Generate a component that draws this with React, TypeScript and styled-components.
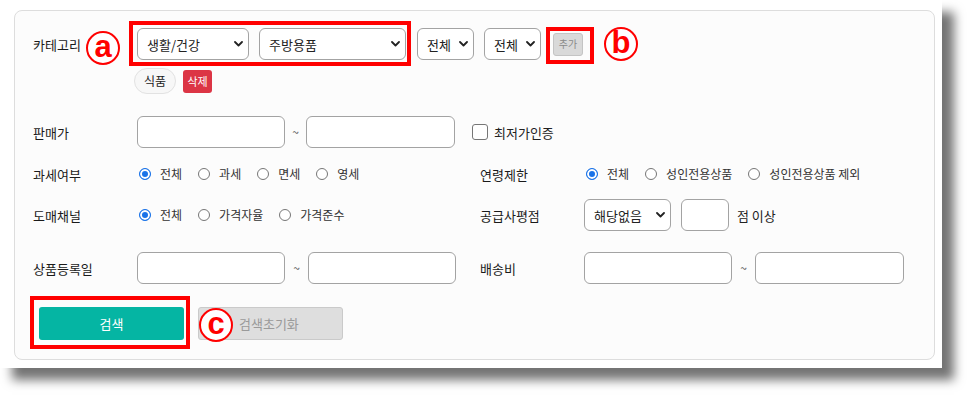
import React from "react";
import styled, { createGlobalStyle } from "styled-components";

const GlobalStyle = createGlobalStyle`
  html, body { margin: 0; padding: 0; background: #ffffff; }
  body { font-family: "Noto Sans CJK KR", "Noto Sans", sans-serif; color: #222; }
  * { box-sizing: border-box; }
`;

const Page = styled.div`
  width: 967px;
  height: 403px;
  overflow: hidden;
`;

const Sheet = styled.div`
  width: 942px;
  height: 368px;
  background: #ffffff;
  box-shadow: 12px 12px 10px rgba(0, 0, 0, 0.55);
  padding: 10px 0 0 14px;
`;

const Card = styled.div`
  width: 921px;
  height: 350px;
  border: 1px solid #dddddd;
  border-radius: 8px;
  background: #fcfcfc;
  padding: 17px 0 0 18px;
  display: flex;
  flex-direction: column;
`;

const Row = styled.div<{ $mt?: number; $h?: number }>`
  position: relative;
  display: flex;
  align-items: center;
  margin-top: ${(p) => p.$mt ?? 0}px;
  height: ${(p) => p.$h ?? 32}px;
`;

const SplitRow = styled.div<{ $mt?: number; $h?: number }>`
  display: grid;
  grid-template-columns: 447px 1fr;
  margin-top: ${(p) => p.$mt ?? 0}px;
  height: ${(p) => p.$h ?? 32}px;
`;

const Cell = styled.div`
  display: flex;
  align-items: center;
`;

const Label = styled.div`
  width: 104px;
  flex-shrink: 0;
  font-size: 13px;
  line-height: 1;
  color: #1a1a1a;
`;

const Group = styled.div<{ $gap?: number }>`
  display: flex;
  align-items: center;
  gap: ${(p) => p.$gap ?? 10}px;
`;

const Frame = styled.div<{ $inset: string; $ml?: number }>`
  position: relative;
  display: flex;
  align-items: center;
  gap: 10px;
  margin-left: ${(p) => p.$ml ?? 0}px;
  &::after {
    content: "";
    position: absolute;
    inset: ${(p) => p.$inset};
    border: 4px solid #ff0000;
    pointer-events: none;
  }
`;

const Marker = styled.div<{ $x: number; $y: number }>`
  position: absolute;
  left: ${(p) => p.$x}px;
  top: ${(p) => p.$y}px;
  width: 34px;
  height: 34px;
  border-radius: 50%;
  border: 2.5px solid #ff0000;
  background: #ffffff;
  color: #ff0000;
  font-family: "Liberation Sans", Arial, sans-serif;
  font-weight: 700;
  font-size: 31px;
  line-height: 1;
  display: flex;
  align-items: center;
  justify-content: center;
  padding-bottom: 4px;
  z-index: 2;
`;

const SelectWrap = styled.div<{ $w: number; $ml?: number }>`
  position: relative;
  width: ${(p) => p.$w}px;
  height: 32px;
  margin-left: ${(p) => p.$ml ?? 0}px;
  flex-shrink: 0;
  svg {
    position: absolute;
    right: 6px;
    top: 13px;
    pointer-events: none;
  }
`;

const NativeSelect = styled.select`
  appearance: none;
  -webkit-appearance: none;
  width: 100%;
  height: 100%;
  border: 1px solid #a3a3a3;
  border-radius: 6px;
  background: #ffffff;
  padding: 0 0 0 9px;
  font-family: inherit;
  font-size: 13px;
  color: #222;
  outline: none;
`;

const Chevron = () => (
  <svg width="9" height="6" viewBox="0 0 9 6">
    <path d="M1 1 L4.5 4.5 L8 1" fill="none" stroke="#222" strokeWidth="1.8" strokeLinecap="round" strokeLinejoin="round" />
  </svg>
);

const Select = ({ w, ml, value }: { w: number; ml?: number; value: string }) => (
  <SelectWrap $w={w} $ml={ml}>
    <NativeSelect defaultValue={value}>
      <option value={value}>{value}</option>
    </NativeSelect>
    <Chevron />
  </SelectWrap>
);

const TextInput = styled.input.attrs({ type: "text" })<{ $w: number }>`
  width: ${(p) => p.$w}px;
  height: 32px;
  border: 1px solid #a3a3a3;
  border-radius: 6px;
  background: #ffffff;
  padding: 0 8px;
  font-family: inherit;
  font-size: 13px;
  outline: none;
  flex-shrink: 0;
`;

const Tilde = styled.span<{ $space: number }>`
  width: ${(p) => p.$space}px;
  text-align: center;
  font-size: 12px;
  color: #555;
  line-height: 1;
`;

const AddButton = styled.button`
  width: 30px;
  height: 23px;
  padding: 0;
  border: 1px solid #c4c4c4;
  border-radius: 3px;
  background: #d9d9d9;
  color: #8a8a8a;
  font-family: inherit;
  font-size: 10px;
  line-height: 1;
`;

const TagRow = styled.div`
  display: flex;
  align-items: center;
  gap: 7px;
  margin-top: 8px;
  padding-left: 101px;
  height: 26px;
`;

const Chip = styled.span`
  display: inline-flex;
  align-items: center;
  justify-content: center;
  width: 42px;
  height: 26px;
  border: 1px solid #e2e2e2;
  border-radius: 13px;
  background: #f7f7f7;
  font-size: 12px;
  color: #222;
  line-height: 1;
`;

const DeleteButton = styled.button`
  width: 29px;
  height: 23px;
  padding: 0;
  border: none;
  border-radius: 3px;
  background: #dc3545;
  color: #ffffff;
  font-family: inherit;
  font-size: 11px;
  line-height: 1;
`;

const CheckLabel = styled.label<{ $ml?: number }>`
  display: flex;
  align-items: center;
  gap: 6px;
  margin-left: ${(p) => p.$ml ?? 0}px;
  font-size: 13px;
  color: #222;
  line-height: 1;
`;

const CheckBox = styled.input.attrs({ type: "checkbox" })`
  appearance: none;
  -webkit-appearance: none;
  margin: 0;
  width: 16px;
  height: 16px;
  border: 1px solid #767676;
  border-radius: 3px;
  background: #ffffff;
`;

const RadioGroup = styled.div`
  display: flex;
  align-items: center;
  gap: 16px;
  padding-left: 2px;
`;

const RadioItem = styled.label`
  display: flex;
  align-items: center;
  gap: 9px;
  font-size: 12px;
  line-height: 1;
  color: #333;
`;

const Radio = styled.input.attrs({ type: "radio" })`
  appearance: none;
  -webkit-appearance: none;
  margin: 0;
  width: 12px;
  height: 12px;
  border-radius: 50%;
  border: 1px solid #767676;
  background: #ffffff;
  &:checked {
    border-color: #1a73e8;
    background: #1a73e8;
    box-shadow: inset 0 0 0 2px #ffffff;
  }
`;

const Suffix = styled.span`
  margin-left: 8px;
  font-size: 13px;
  color: #222;
  line-height: 1;
`;

const PrimaryButton = styled.button`
  width: 145px;
  height: 33px;
  border: none;
  border-radius: 3px;
  background: #05b5a3;
  color: #ffffff;
  font-family: inherit;
  font-size: 13px;
`;

const ResetButton = styled.button`
  width: 145px;
  height: 33px;
  margin-left: 14px;
  border: 1px solid #cacaca;
  border-radius: 3px;
  background: #dedede;
  color: #9a9a9a;
  font-family: inherit;
  font-size: 13px;
  padding-left: 40px;
  text-align: left;
`;

const RadioSet = ({ name, items }: { name: string; items: string[] }) => (
  <RadioGroup>
    {items.map((t, i) => (
      <RadioItem key={t}>
        <Radio name={name} defaultChecked={i === 0} />
        {t}
      </RadioItem>
    ))}
  </RadioGroup>
);

export default function App() {
  return (
    <Page>
      <GlobalStyle />
      <Sheet>
        <Card>
          <Row $h={32}>
            <Label>카테고리</Label>
            <Marker $x={53} $y={3}>a</Marker>
            <Frame $inset="-7px -5px -6px -8px">
              <Select w={112} value="생활/건강" />
              <Select w={147} value="주방용품" />
            </Frame>
            <Select w={57} ml={11} value="전체" />
            <Select w={57} ml={10} value="전체" />
            <Frame $inset="-6px -11px -8px -7px" $ml={12}>
              <AddButton>추가</AddButton>
            </Frame>
            <Marker $x={571} $y={-1}>b</Marker>
          </Row>
          <TagRow>
            <Chip>식품</Chip>
            <DeleteButton>삭제</DeleteButton>
          </TagRow>
          <Row $mt={22} $h={32}>
            <Label>판매가</Label>
            <TextInput $w={148} />
            <Tilde $space={21}>~</Tilde>
            <TextInput $w={149} />
            <CheckLabel $ml={17}>
              <CheckBox />
              최저가인증
            </CheckLabel>
          </Row>
          <SplitRow $mt={11} $h={30}>
            <Cell>
              <Label>과세여부</Label>
              <RadioSet name="tax" items={["전체", "과세", "면세", "영세"]} />
            </Cell>
            <Cell>
              <Label>연령제한</Label>
              <RadioSet name="age" items={["전체", "성인전용상품", "성인전용상품 제외"]} />
            </Cell>
          </SplitRow>
          <SplitRow $mt={10} $h={32}>
            <Cell>
              <Label>도매채널</Label>
              <RadioSet name="channel" items={["전체", "가격자율", "가격준수"]} />
            </Cell>
            <Cell>
              <Label>공급사평점</Label>
              <Group $gap={10}>
                <Select w={87} value="해당없음" />
                <TextInput $w={48} />
              </Group>
              <Suffix>점 이상</Suffix>
            </Cell>
          </SplitRow>
          <SplitRow $mt={21} $h={32}>
            <Cell>
              <Label>상품등록일</Label>
              <TextInput $w={148} />
              <Tilde $space={23}>~</Tilde>
              <TextInput $w={148} />
            </Cell>
            <Cell>
              <Label>배송비</Label>
              <TextInput $w={148} />
              <Tilde $space={23}>~</Tilde>
              <TextInput $w={149} />
            </Cell>
          </SplitRow>
          <Row $mt={23} $h={33}>
            <Frame $inset="-11px -6px -9px -9px" $ml={6}>
              <PrimaryButton>검색</PrimaryButton>
            </Frame>
            <ResetButton>검색초기화</ResetButton>
            <Marker $x={166} $y={1}>c</Marker>
          </Row>
        </Card>
      </Sheet>
    </Page>
  );
}
